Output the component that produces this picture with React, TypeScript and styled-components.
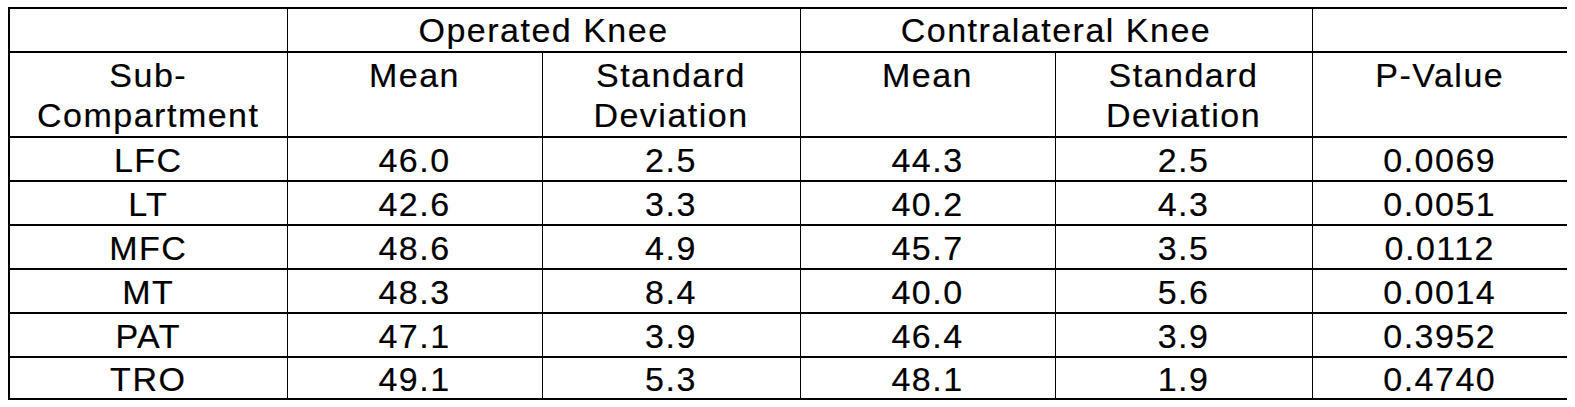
import styled, { createGlobalStyle } from 'styled-components';

const GlobalStyle = createGlobalStyle`
  body {
    margin: 7px 8px;
    background: #ffffff;
    font-family: "Liberation Sans", Arial, sans-serif;
  }
`;

const Table = styled.table`
  border-collapse: collapse;
  width: 1559px;
  table-layout: fixed;
  color: #000000;
  font-size: 34px;
  letter-spacing: 1.5px;
  -webkit-text-stroke: 0.2px #000;
  border: 2px solid #000;
`;

const HeadRow = styled.tr<{ $height: number }>`
  height: ${({ $height }) => $height}px;
`;

const HeadCell = styled.th<{ $top?: boolean }>`
  font-weight: normal;
  text-align: center;
  vertical-align: ${({ $top }) => ($top ? 'top' : 'middle')};
  line-height: 40px;
  padding: ${({ $top }) => ($top ? '2px 0 0' : '0')};
  border-left: 1px solid #000;
  border-right: 1px solid #000;
  border-top: 2px solid #000;
  border-bottom: 2px solid #000;
`;

const DataRow = styled.tr<{ $last?: boolean }>`
  height: ${({ $last }) => ($last ? 42 : 44)}px;
`;

const Cell = styled.td`
  text-align: center;
  vertical-align: middle;
  padding: 1px 0 0;
  line-height: 38px;
  border-left: 1px solid #000;
  border-right: 1px solid #000;
  border-top: 2px solid #000;
  border-bottom: 2px solid #000;
`;

const widths = [278, 255, 258, 255, 257, 256];

const rows = [
  ['LFC', '46.0', '2.5', '44.3', '2.5', '0.0069'],
  ['LT', '42.6', '3.3', '40.2', '4.3', '0.0051'],
  ['MFC', '48.6', '4.9', '45.7', '3.5', '0.0112'],
  ['MT', '48.3', '8.4', '40.0', '5.6', '0.0014'],
  ['PAT', '47.1', '3.9', '46.4', '3.9', '0.3952'],
  ['TRO', '49.1', '5.3', '48.1', '1.9', '0.4740'],
];

export default function App() {
  return (
    <>
      <GlobalStyle />
      <Table>
        <colgroup>
          {widths.map((w, i) => (
            <col key={i} style={{ width: w }} />
          ))}
        </colgroup>
        <thead>
          <HeadRow $height={44}>
            <HeadCell />
            <HeadCell colSpan={2}>Operated Knee</HeadCell>
            <HeadCell colSpan={2}>Contralateral Knee</HeadCell>
            <HeadCell />
          </HeadRow>
          <HeadRow $height={85}>
            <HeadCell $top>Sub-<br />Compartment</HeadCell>
            <HeadCell $top>Mean</HeadCell>
            <HeadCell $top>Standard<br />Deviation</HeadCell>
            <HeadCell $top>Mean</HeadCell>
            <HeadCell $top>Standard<br />Deviation</HeadCell>
            <HeadCell $top>P-Value</HeadCell>
          </HeadRow>
        </thead>
        <tbody>
          {rows.map((r, i) => (
            <DataRow key={r[0]} $last={i === rows.length - 1}>
              {r.map((v, j) => (
                <Cell key={j}>{v}</Cell>
              ))}
            </DataRow>
          ))}
        </tbody>
      </Table>
    </>
  );
}
